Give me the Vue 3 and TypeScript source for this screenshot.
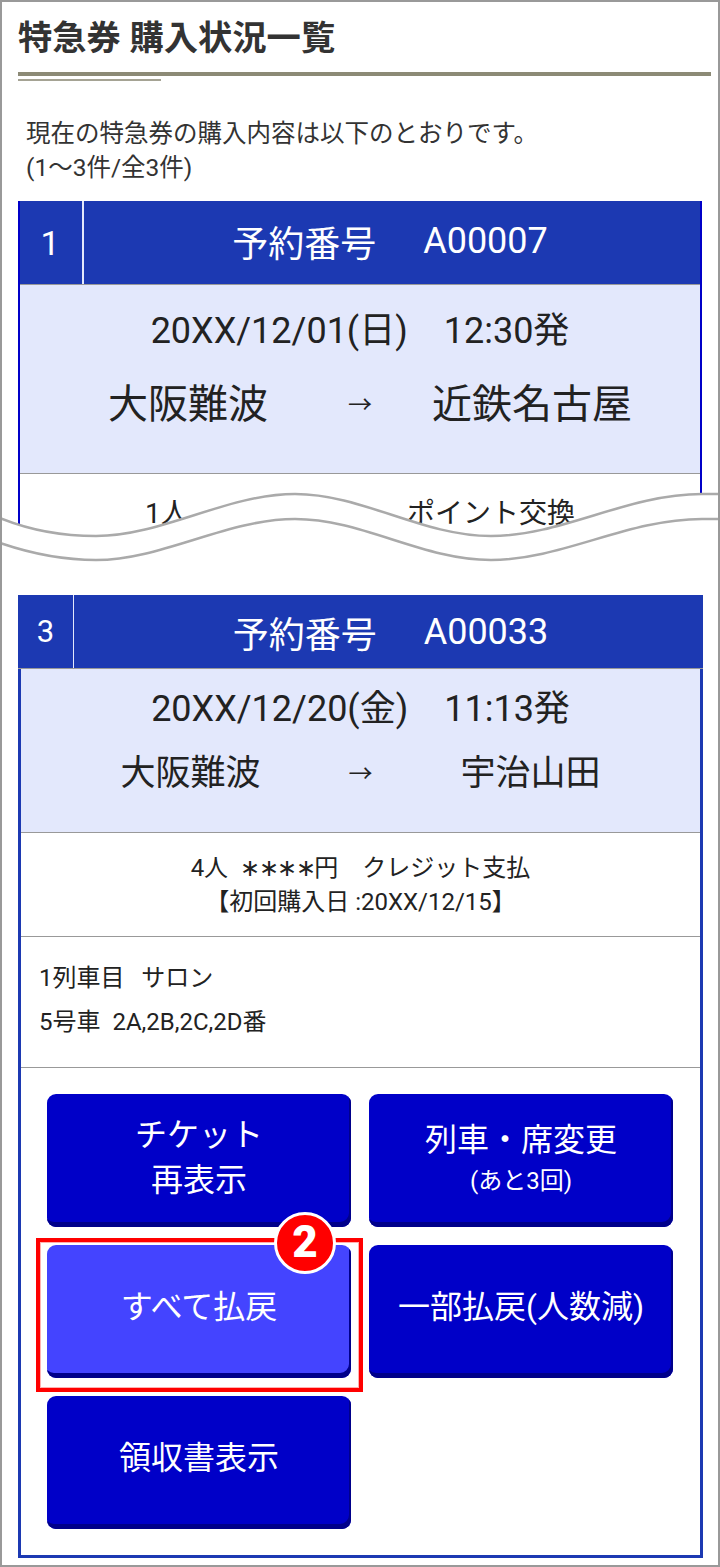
<script setup lang="ts">
const buttons = [
  { lines: ['チケット', '再表示'], sub: '', active: false },
  { lines: ['列車・席変更'], sub: '(あと3回)', active: false },
  { lines: ['すべて払戻'], sub: '', active: true },
  { lines: ['一部払戻(人数減)'], sub: '', active: false },
  { lines: ['領収書表示'], sub: '', active: false },
]
</script>

<template>
  <main class="page">
    <h1 class="title">特急券 購入状況一覧</h1>
    <div class="rule"></div>
    <div class="rule-short"></div>
    <p class="intro">現在の特急券の購入内容は以下のとおりです。<br />(1～3件/全3件)</p>

    <div class="cut">
      <section class="card first">
        <header class="head">
          <span class="num">1</span>
          <span class="rsv"><span>予約番号</span><span>A00007</span></span>
        </header>
        <div class="trip">
          <div class="when">20XX/12/01(日)　12:30発</div>
          <div class="route"><span>大阪難波</span><span class="arrow">→</span><span>近鉄名古屋</span></div>
        </div>
        <div class="peek">1人　&ensp;∗∗∗∗円　　ポイント交換</div>
      </section>
      <svg class="wave" viewBox="0 0 716 90" preserveAspectRatio="none" aria-hidden="true">
        <path class="fill" d="M-2 27 C30 40 62 45 94 45 C160 45 225 3 293 3 C360 3 420 45 489 45 C560 45 625 3 700 3 L716 3 L716 90 L-2 90 Z" />
        <path class="line" d="M-2 27 C30 40 62 45 94 45 C160 45 225 3 293 3 C360 3 420 45 489 45 C560 45 625 3 700 3 L716 3" />
        <path class="line" d="M-2 52 C30 63 62 69 94 69 C160 69 225 28 293 28 C360 28 420 69 489 69 C560 69 625 28 700 28 L716 28" />
      </svg>
    </div>

    <section class="card last">
      <header class="head small">
        <span class="num">3</span>
        <span class="rsv"><span>予約番号</span><span>A00033</span></span>
      </header>
      <div class="trip">
        <div class="when">20XX/12/20(金)　11:13発</div>
        <div class="route"><span>大阪難波</span><span class="arrow">→</span><span>宇治山田</span></div>
      </div>
      <div class="info"><span>4人&ensp;<span class="stars">∗∗∗∗</span>円　クレジット支払</span><span>【初回購入日 :20XX/12/15】</span></div>
      <div class="seat">1列車目&nbsp;&nbsp;&thinsp;サロン<br />5号車&nbsp;&nbsp;2A,2B,2C,2D番</div>
      <div class="actions">
        <button
          v-for="b in buttons"
          :key="b.lines[0]"
          class="btn"
          :class="{ active: b.active, single: b.lines.length === 1 && !b.sub }"
          type="button"
        >
          <span v-for="l in b.lines" :key="l" class="label">{{ l }}</span>
          <span v-if="b.sub" class="sub">{{ b.sub }}</span>
          <template v-if="b.active">
            <span class="mark"></span>
            <span class="badge">2</span>
          </template>
        </button>
      </div>
    </section>
  </main>
</template>

<style>
html, body { margin: 0; background: #fff; }
</style>

<style scoped>
.page {
  box-sizing: border-box;
  width: 720px;
  height: 1567px;
  border: 2px solid #999;
  padding: 0 16px;
  overflow: hidden;
  color: #333;
  font-family: Roboto, "Noto Sans CJK JP", sans-serif;
  background: #fff;
}
.title {
  margin: 0;
  height: 70px;
  font-size: 34.3px;
  font-weight: 700;
  line-height: 73px;
  color: #333;
}
.rule { height: 4px; background: #8c8a76; margin-right: -9px; }
.rule-short { width: 143px; height: 2px; margin-top: 3px; background: #a5a394; }
.intro {
  margin: 36px 0 0 8px;
  height: 68px;
  font-size: 24.5px;
  line-height: 34px;
}
.cut { position: relative; margin-top: 16px; height: 394px; }
.card {
  box-sizing: border-box;
  border: solid #1c39b2;
  background: #fff;
}
.first {
  width: 684px;
  height: 350px;
  border-width: 0 2px;
  border-color: #0000c8;
  overflow: hidden;
}
.head {
  display: flex;
  height: 84px;
  margin: 0 -2px;
  background: #1c39b2;
  color: #fff;
  border-bottom: 1px solid #999;
  box-sizing: border-box;
}
.num {
  display: flex;
  align-items: center;
  justify-content: center;
  flex: none;
  width: 66px;
  box-sizing: border-box;
  border-right: 2px solid #e3e8fc;
  font-size: 34px;
}
.rsv {
  flex: 1;
  display: flex;
  align-items: center;
  justify-content: center;
  gap: 47px;
  font-size: 36px;
  padding: 0 6px 4px 0;
}
.trip {
  box-sizing: border-box;
  background: #e3e8fc;
  height: 189px;
  display: flex;
  flex-direction: column;
  align-items: center;
  border-bottom: 1px solid #999;
  color: #222;
}
.when { font-size: 36px; line-height: 50px; margin-top: 21px; }
.route {
  display: flex;
  align-items: center;
  justify-content: center;
  gap: 70px;
  font-size: 40px;
  line-height: 60px;
  margin-top: 19px;
  padding-left: 20px;
}
.first .arrow { margin: 0 -10px 0 10px; }
.arrow { font-size: 24px; }
.peek {
  text-align: center;
  font-size: 28px;
  line-height: 40px;
  padding: 20px 0 0 0;
  color: #222;
  white-space: nowrap;
}
.wave {
  position: absolute;
  left: -16px;
  top: 290px;
  width: 716px;
  height: 90px;
  overflow: visible;
}
.fill { fill: #fff; }
.line { fill: none; stroke: #aaa; stroke-width: 2.5; }
.last {
  width: 685px;
  height: 963px;
  border-width: 0 3px 3px;
}
.last .head { height: 74px; margin: 0 -3px; }
.last .num { width: 56px; border-right-width: 1px; font-size: 31px; }
.last .rsv { padding: 0 3px 0 7px; }
.last .trip { height: 164px; }
.last .when { margin-top: 15px; }
.last .route { font-size: 35px; gap: 88px; margin-top: 10px; padding-left: 0; }
.info {
  height: 103px;
  box-sizing: content-box;
  border-bottom: 1px solid #999;
  text-align: center;
  font-size: 24px;
  line-height: 34px;
  display: flex;
  flex-direction: column;
  align-items: center;
  justify-content: center;
  color: #222;
  padding-bottom: 0;
}
.stars { letter-spacing: -1.5px; }
.seat {
  height: 131px;
  box-sizing: border-box;
  border-bottom: 1px solid #999;
  padding: 19px 0 0 18px;
  font-size: 24px;
  line-height: 44px;
  color: #222;
}
.actions {
  display: grid;
  grid-template-columns: 304px 304px;
  grid-auto-rows: 133px;
  gap: 18px;
  padding: 26px 0 0 26px;
}
.btn {
  position: relative;
  display: flex;
  flex-direction: column;
  align-items: center;
  justify-content: center;
  padding: 0 0 5px;
  border: 0;
  border-radius: 9px;
  background: #0000c8;
  box-shadow: inset -2px -5px 0 #00008a;
  color: #fff;
  font: inherit;
}
.btn.single { padding-bottom: 9px; }
.btn.active { background: #4444ff; }
.label { font-size: 32px; line-height: 45px; }
.sub { font-size: 24px; line-height: 36px; }
.mark {
  position: absolute;
  inset: -7px -12px -14px -11px;
  border: 4px solid #f00;
  outline: 1px solid #ffb0b0;
  outline-offset: -5px;
  pointer-events: none;
}
.badge {
  position: absolute;
  right: 15px;
  top: -33px;
  box-sizing: border-box;
  width: 62px;
  height: 62px;
  border: 3px solid #fff;
  border-radius: 50%;
  background: #f00;
  color: #fff;
  font-family: Roboto, sans-serif;
  font-size: 44px;
  font-weight: 900;
  line-height: 55px;
  text-align: center;
}
</style>
